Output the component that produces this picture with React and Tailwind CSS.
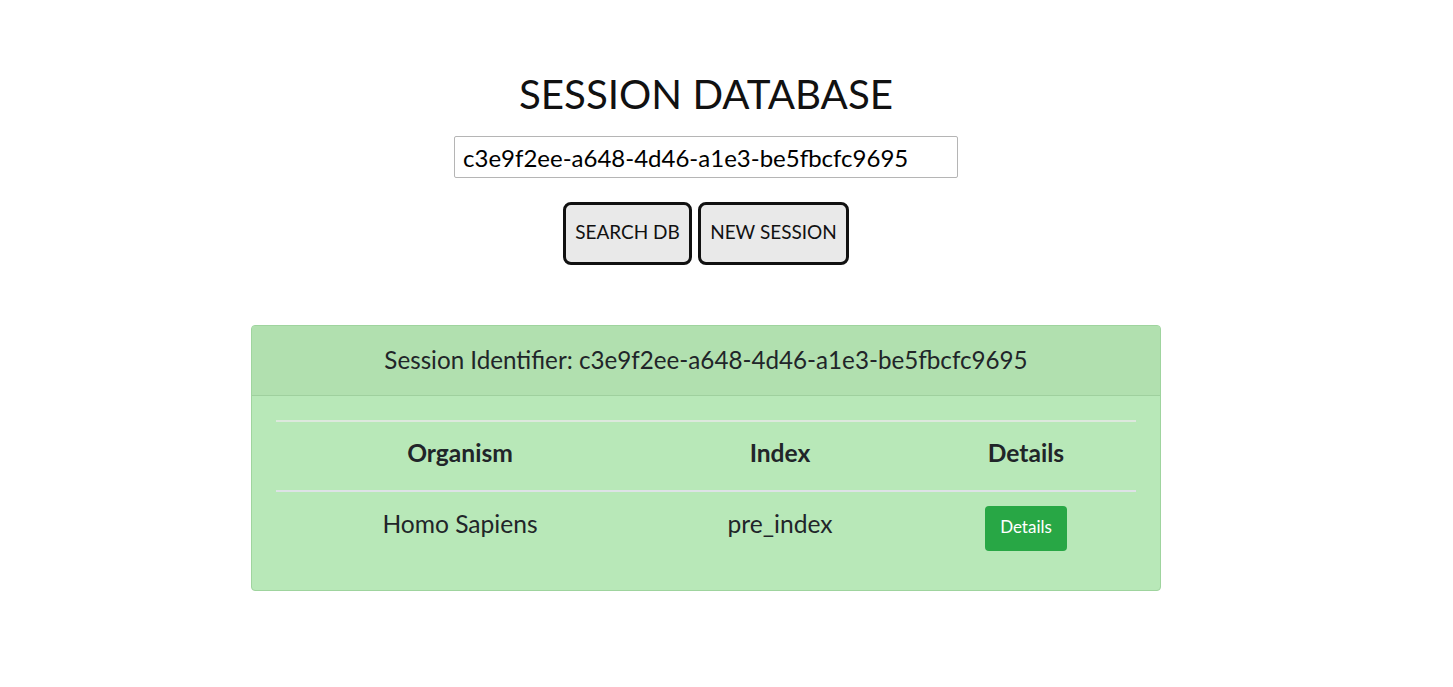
import React, { useState } from 'react';

const rows = [{ organism: 'Homo Sapiens', index: 'pre_index' }];

export default function App() {
    const [sessionId, setSessionId] = useState('c3e9f2ee-a648-4d46-a1e3-be5fbcfc9695');

    return (
        <div className="min-h-screen bg-white text-[#212529] pr-[41px]" style={{ fontFamily: 'Lato, "Open Sans", sans-serif' }}>
            <div className="flex flex-col items-center pt-[66px]">
                <h1 className="text-[40.3px] leading-[56px] text-[#111] font-normal">SESSION DATABASE</h1>
                <input
                    type="text"
                    value={sessionId}
                    onChange={(e) => setSessionId(e.target.value)}
                    className="mt-[14px] w-[504px] h-[42px] border border-[#b5b5b5] rounded-[2px] px-[8px] text-[24px] text-black outline-none"
                />
                <div className="mt-[24px] flex gap-[6px]">
                    <button className="h-[63px] w-[129px] pb-[3px] border-[3px] border-[#111] rounded-[8px] bg-[#e9e9e9] text-[19px] text-[#111]">
                        SEARCH DB
                    </button>
                    <button className="h-[63px] w-[151px] pb-[3px] border-[3px] border-[#111] rounded-[8px] bg-[#e9e9e9] text-[19px] text-[#111]">
                        NEW SESSION
                    </button>
                </div>

                <div className="mt-[60px] w-[910px] border border-[#9fd49e] rounded-[4px] bg-[#b8e8b8] overflow-hidden">
                    <div className="h-[70px] flex items-center justify-center bg-[#b1e0af] border-b border-[#9fd09e] text-[24.2px]">
                        Session Identifier: {sessionId}
                    </div>
                    <div className="p-[24px]">
                        <table className="w-full border-collapse text-[24.6px]">
                            <thead>
                                <tr className="border-t-2 border-[#dde8dd]">
                                    <th className="w-[368px] h-[70px] pb-[5px] font-bold text-center align-middle">Organism</th>
                                    <th className="w-[272px] h-[70px] pb-[5px] font-bold text-center align-middle">Index</th>
                                    <th className="w-[220px] h-[70px] pb-[5px] font-bold text-center align-middle">Details</th>
                                </tr>
                            </thead>
                            <tbody>
                                {rows.map((row) => (
                                    <tr key={row.index} className="border-t-2 border-[#dee2e6]">
                                        <td className="text-center align-top pt-[17px] leading-[29px]">{row.organism}</td>
                                        <td className="text-center align-top pt-[17px] leading-[29px]">{row.index}</td>
                                        <td className="text-center align-top pt-[14px] pb-[15px]">
                                            <button className="h-[45px] px-[15px] pb-[3px] rounded-[4px] bg-[#28a745] text-white text-[17px]">
                                                Details
                                            </button>
                                        </td>
                                    </tr>
                                ))}
                            </tbody>
                        </table>
                    </div>
                </div>
            </div>
        </div>
    );
}
